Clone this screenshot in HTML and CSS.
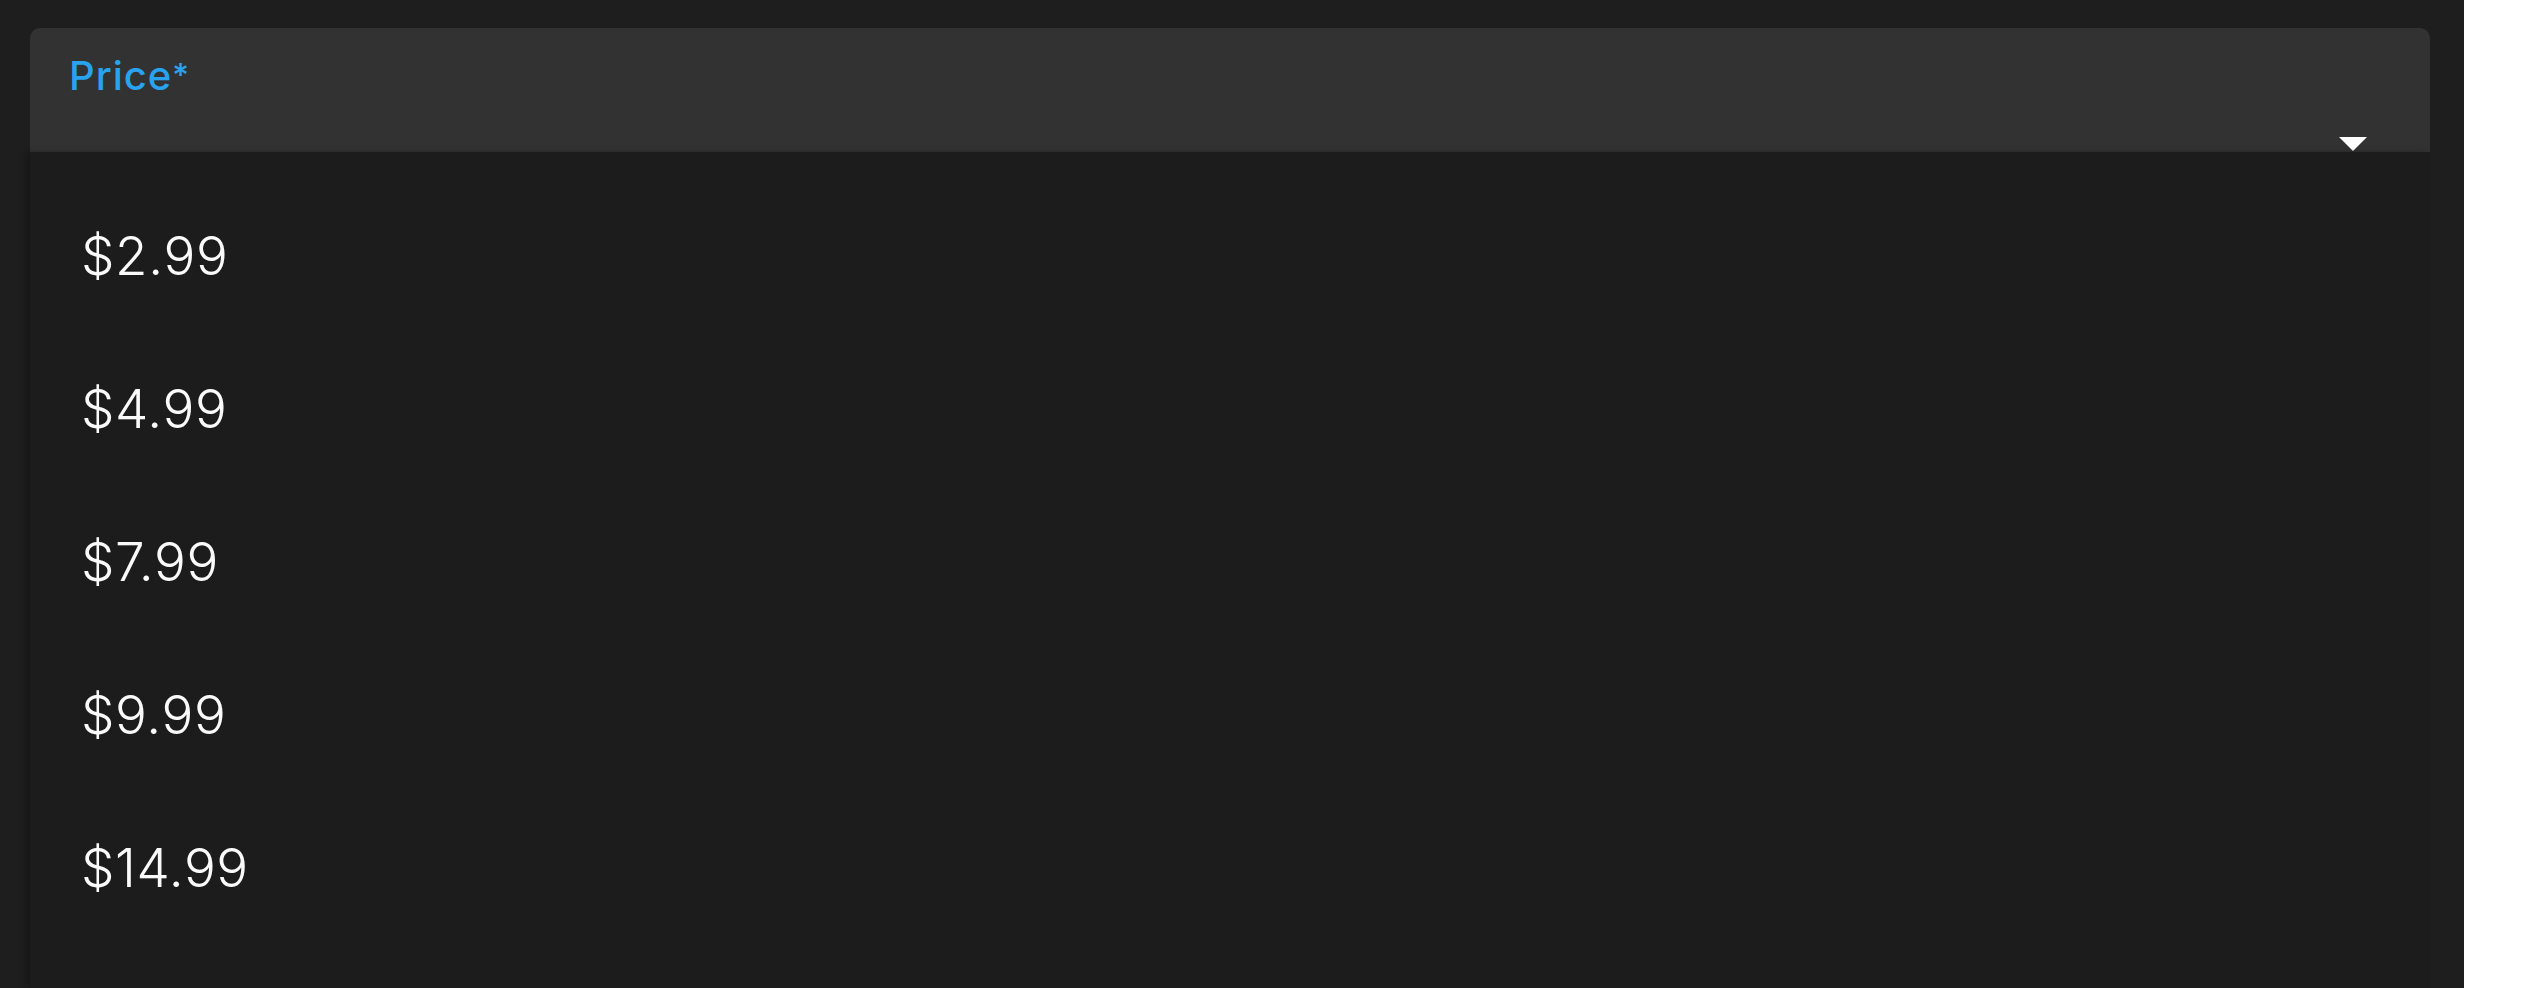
FILE: index.html
```html
<!DOCTYPE html>
<html lang="en">
<head>
  <meta charset="UTF-8" />
  <title>Price</title>
  <link rel="stylesheet" href="styles.css">
</head>
<body>

<div class="screen">
  <!-- select field, open -->
  <div class="field">
    <label class="field-label">Price<span class="req">*</span></label>
    <svg class="caret" width="28" height="14" viewBox="0 0 28 14">
      <path d="M0 0 H28 L14 14 Z" fill="#fff"/>
    </svg>
  </div>

  <ul class="menu">
    <li class="menu-item">$2.99</li>
    <li class="menu-item">$4.99</li>
    <li class="menu-item">$7.99</li>
    <li class="menu-item">$9.99</li>
    <li class="menu-item">$14.99</li>
  </ul>
</div>

</body>
</html>
```

FILE: styles.css
```css
html, body {
  height: 100%;
}
body {
  margin: 0;
  background: #fff;
  overflow: hidden;
  font-family: Inter, "Open Sans", sans-serif;
}
.screen {
  width: 2464px;
  height: 100%;
  background: #1e1e1e;
  padding: 28px 34px 0 30px;
  box-sizing: border-box;
  display: flex;
  flex-direction: column;
}
.field {
  height: 124px;
  background: #323232;
  border-radius: 10px 10px 0 0;
  padding: 0 63px 0 39px;
  display: flex;
  justify-content: space-between;
  box-sizing: border-box;
}
.field-label {
  color: #29a3ef;
  font-size: 40px;
  font-weight: 500;
  letter-spacing: 1px;
  line-height: 1;
  margin-top: 28px;
}
.field-label .req {
  font-size: 32px;
  vertical-align: 3px;
}
.caret {
  align-self: flex-end;
  margin-bottom: 1px;
}
.menu {
  flex: 1;
  list-style: none;
  margin: 0;
  padding: 27px 0 0;
  background: #1c1c1c;
  box-shadow: -4px 0 6px rgba(0,0,0,0.25);
}
.menu-item {
  height: 153px;
  display: flex;
  align-items: center;
  padding-left: 51px;
  color: #fafafa;
  font-size: 53px;
  font-weight: 300;
  letter-spacing: 0.6px;
}
```
